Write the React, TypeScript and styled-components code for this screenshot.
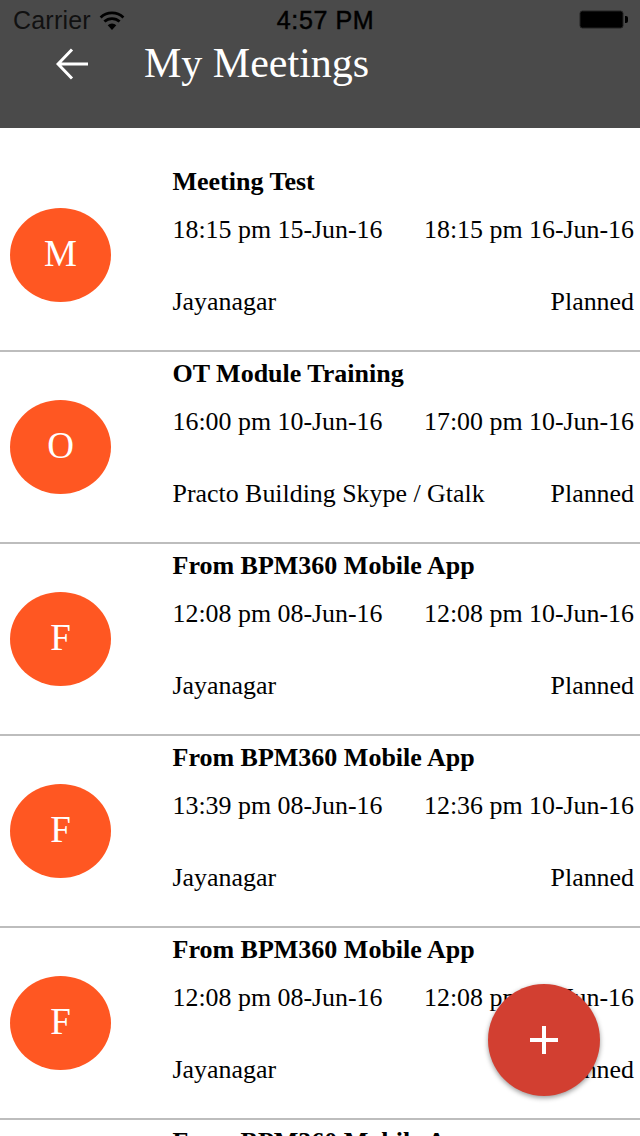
import React from "react";
import styled, { createGlobalStyle } from "styled-components";

const Global = createGlobalStyle`
  html, body { margin: 0; padding: 0; background: #fff; }
  body { font-family: "Liberation Serif", "Times New Roman", serif; color: #000; }
`;

const Screen = styled.div`
  position: relative;
  width: 640px;
  height: 1136px;
  overflow: hidden;
  background: #fff;
`;

const Header = styled.header`
  height: 128px;
  box-sizing: border-box;
  background: #4a4a4a;
  display: flex;
  flex-direction: column;
`;

const StatusBar = styled.div`
  height: 40px;
  display: grid;
  grid-template-columns: 1fr auto 1fr;
  align-items: center;
  padding: 0 12px 0 13px;
  font-family: "Liberation Sans", Arial, sans-serif;
  font-size: 25px;
  color: #000;
`;

const Carrier = styled.div`
  display: flex;
  align-items: center;
  gap: 8px;
  color: #111;
  letter-spacing: 0.2px;
`;

const Time = styled.div`
  margin-left: 10px;
  font-weight: 400;
  letter-spacing: 0.6px;
  -webkit-text-stroke: 0.5px #000;
`;

const BatteryWrap = styled.div`
  display: flex;
  justify-content: flex-end;
`;

const NavBar = styled.div`
  display: flex;
  align-items: center;
  height: 48px;
  padding-left: 56px;
`;

const Title = styled.h1`
  margin: 0 0 0 56px;
  font-size: 42px;
  font-weight: 400;
  color: #fff;
  white-space: nowrap;
  transform: translateY(-1px);
`;

const List = styled.div`
  padding-top: 32px;
`;

const Row = styled.div`
  box-sizing: border-box;
  height: 192px;
  border-bottom: 2px solid #bdbdbd;
  display: flex;
  align-items: center;
  padding: 0 6px 0 10px;
`;

const Avatar = styled.div`
  flex: none;
  width: 101px;
  height: 94px;
  padding-bottom: 4px;
  box-sizing: border-box;
  border-radius: 50%;
  background: #ff5722;
  color: #fff;
  font-size: 37px;
  display: flex;
  align-items: center;
  justify-content: center;
`;

const Body = styled.div`
  flex: 1;
  align-self: stretch;
  margin-left: 61.5px;
  display: flex;
  flex-direction: column;
  font-size: 25.9px;
  line-height: 30px;
  white-space: nowrap;
`;

const Name = styled.div`
  font-weight: 700;
  font-size: 26px;
  margin-top: 7px;
`;

const Line = styled.div<{ $gap: number }>`
  display: flex;
  justify-content: space-between;
  margin-top: ${(p) => p.$gap}px;
`;

const Fab = styled.button`
  position: absolute;
  left: 488px;
  top: 984px;
  width: 112px;
  height: 112px;
  padding: 0;
  border: none;
  border-radius: 50%;
  background: #d23f31;
  box-shadow: 0 2px 5px rgba(0, 0, 0, 0.4);
  display: flex;
  align-items: center;
  justify-content: center;
`;

const meetings = [
  { n: "Meeting Test", s: "18:15 pm 15-Jun-16", e: "18:15 pm 16-Jun-16", l: "Jayanagar" },
  { n: "OT Module Training", s: "16:00 pm 10-Jun-16", e: "17:00 pm 10-Jun-16", l: "Practo Building Skype / Gtalk" },
  { n: "From BPM360 Mobile App", s: "12:08 pm 08-Jun-16", e: "12:08 pm 10-Jun-16", l: "Jayanagar" },
  { n: "From BPM360 Mobile App", s: "13:39 pm 08-Jun-16", e: "12:36 pm 10-Jun-16", l: "Jayanagar" },
  { n: "From BPM360 Mobile App", s: "12:08 pm 08-Jun-16", e: "12:08 pm 10-Jun-16", l: "Jayanagar" },
  { n: "From BPM360 Mobile App", s: "12:08 pm 08-Jun-16", e: "12:08 pm 10-Jun-16", l: "Jayanagar" },
];

export default function App() {
  return (
    <Screen>
      <Global />
      <Header>
        <StatusBar>
          <Carrier>
            Carrier
            <svg width="26" height="19" viewBox="0 0 26 19">
              <path d="M13 19 L8.7 14.2 A6.4 6.4 0 0 1 17.3 14.2 Z" fill="#000" />
              <path d="M5.4 10.6 A11 11 0 0 1 20.6 10.6" fill="none" stroke="#000" strokeWidth="2.8" />
              <path d="M1.6 6.4 A16.5 16.5 0 0 1 24.4 6.4" fill="none" stroke="#000" strokeWidth="2.8" />
            </svg>
          </Carrier>
          <Time>4:57 PM</Time>
          <BatteryWrap>
            <svg width="49" height="20" viewBox="0 0 49 20">
              <rect x="1" y="1" width="43" height="17" rx="2.5" fill="#000" stroke="#222" strokeWidth="1" />
              <path d="M46 6 h1 a2 2 0 0 1 2 2 v3 a2 2 0 0 1 -2 2 h-1 Z" fill="#000" />
            </svg>
          </BatteryWrap>
        </StatusBar>
        <NavBar>
          <svg width="32" height="32" viewBox="0 0 32 32">
            <path d="M32 16 H3 M16 1.5 L2 16 L16 30.5" fill="none" stroke="#fff" strokeWidth="3" />
          </svg>
          <Title>My Meetings</Title>
        </NavBar>
      </Header>
      <List>
        {meetings.map((m, i) => (
          <Row key={i}>
            <Avatar>{m.n[0]}</Avatar>
            <Body>
              <Name>{m.n}</Name>
              <Line $gap={18}>
                <span>{m.s}</span>
                <span>{m.e}</span>
              </Line>
              <Line $gap={42}>
                <span>{m.l}</span>
                <span>Planned</span>
              </Line>
            </Body>
          </Row>
        ))}
      </List>
      <Fab aria-label="Add">
        <svg width="28" height="28" viewBox="0 0 28 28">
          <path d="M14 0 V28 M0 14 H28" stroke="#fff" strokeWidth="4" />
        </svg>
      </Fab>
    </Screen>
  );
}
